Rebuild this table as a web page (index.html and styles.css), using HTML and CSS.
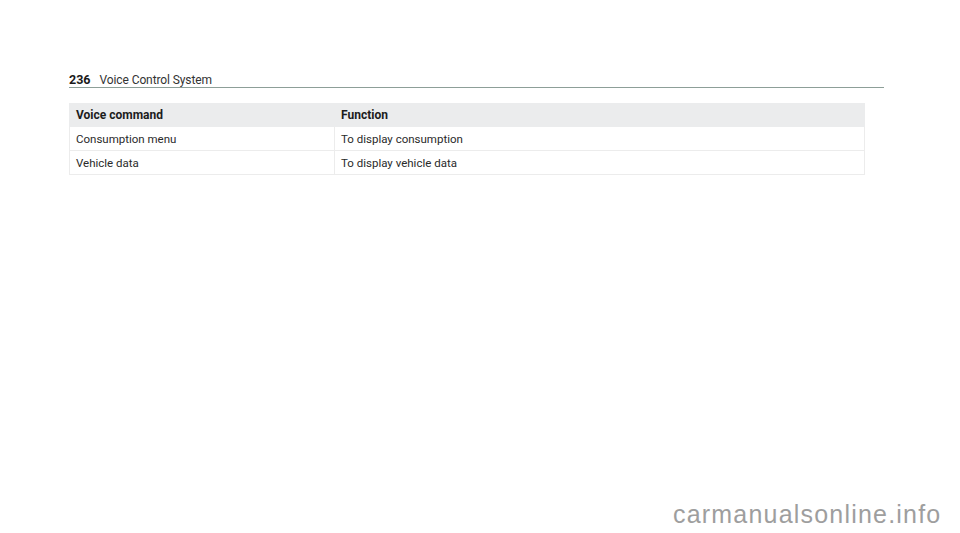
FILE: index.html
```html
<!DOCTYPE html>
<html lang="en">
<head>
<meta charset="utf-8">
<title>Voice Control System</title>
<link rel="stylesheet" href="styles.css">
</head>
<body>
<div class="page">
  <header class="running-head">
    <span class="page-no">236</span>
    <span class="chapter">Voice Control System</span>
  </header>
  <table class="cmd-table">
    <thead>
      <tr><th class="col1">Voice command</th><th>Function</th></tr>
    </thead>
    <tbody>
      <tr class="r1"><td>Consumption menu</td><td>To display consumption</td></tr>
      <tr class="r2"><td>Vehicle data</td><td>To display vehicle data</td></tr>
    </tbody>
  </table>
</div>
<div class="watermark">carmanualsonline.info</div>
</body>
</html>
```
FILE: styles.css
```css
html, body {
  margin: 0;
  padding: 0;
  background: #ffffff;
}
body {
  position: relative;
  width: 960px;
  height: 533px;
  overflow: hidden;
  font-family: Roboto, "Liberation Sans", Arial, sans-serif;
  color: #222;
}
.page {
  padding: 72px 0 0 69px;
  width: 815px;
}
.running-head {
  display: flex;
  align-items: baseline;
  gap: 9px;
  height: 15px;
  border-bottom: 1px solid #8d9f98;
  font-size: 12px;
  line-height: 15px;
}
.page-no {
  font-weight: 700;
  font-size: 12.5px;
  color: #1a1a1a;
}
.chapter {
  color: #333;
  letter-spacing: -0.1px;
}
.cmd-table {
  margin-top: 15px;
  width: 796px;
  border-collapse: collapse;
  font-size: 11.5px;
}
.cmd-table th, .cmd-table td {
  text-align: left;
  padding: 0 6px;
  border: 1px solid #ececec;
}
.cmd-table th {
  background: #ebeced;
  font-weight: 700;
  font-size: 12px;
  height: 22px;
  color: #1c1c1c;
  border-color: #ebeced;
}
.cmd-table .col1 {
  width: 252px;
}
.cmd-table td {
  height: 23px;
  color: #2a2a2a;
}
.watermark {
  position: absolute;
  left: 673px;
  top: 500px;
  font-family: "Liberation Sans", Arial, sans-serif;
  font-size: 25px;
  line-height: 28px;
  letter-spacing: 1.2px;
  color: #9e9e9e;
  white-space: nowrap;
}
```
